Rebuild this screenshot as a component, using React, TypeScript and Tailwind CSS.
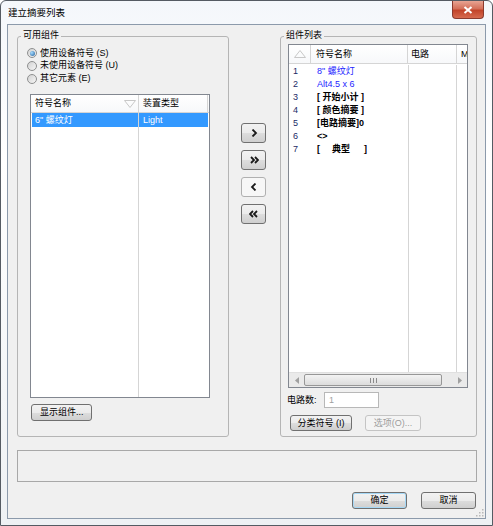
import React from 'react'

const btn =
  "flex items-center justify-center whitespace-nowrap border border-[#707070] rounded-[3px] bg-[linear-gradient(#f2f2f2_0%,#ebebeb_50%,#dddddd_51%,#cfcfcf_100%)] text-[9px] text-black leading-none"

function Radio({ checked }: { checked?: boolean }) {
  return (
    <span className="w-[10px] h-[10px] rounded-full border border-[#8e8f8f] bg-[linear-gradient(135deg,#d2d2d2,#f6f6f6)] flex items-center justify-center shrink-0">
      {checked && <span className="w-[5px] h-[5px] rounded-full bg-[radial-gradient(circle_at_35%_35%,#a8dcff,#1e5f9c)]" />}
    </span>
  )
}

function Chevron({ dir, double }: { dir: 'l' | 'r'; double?: boolean }) {
  const pts = dir === 'r' ? ['2,1 5,4 2,7', '6,1 9,4 6,7'] : ['8,1 5,4 8,7', '4,1 1,4 4,7']
  return (
    <svg width="10" height="8" viewBox="0 0 10 8">
      {double ? (
        pts.map((p) => <polyline key={p} points={p} fill="none" stroke="#1a1a1a" strokeWidth="1.8" />)
      ) : (
        <polyline points={dir === 'r' ? '3.5,0.5 7,4 3.5,7.5' : '6.5,0.5 3,4 6.5,7.5'} fill="none" stroke="#1a1a1a" strokeWidth="1.8" />
      )}
    </svg>
  )
}

function SortTri({ up }: { up?: boolean }) {
  return (
    <svg width="12" height="8" viewBox="0 0 12 8">
      <polygon points={up ? '6,0.5 11.5,7.5 0.5,7.5' : '0.5,0.5 11.5,0.5 6,7.5'} fill="none" stroke="#c8c8c8" strokeWidth="1" />
    </svg>
  )
}

const rows = [
  { n: '1', t: '8" 螺纹灯', c: 'text-[#2424ff]' },
  { n: '2', t: 'Alt4.5 x 6', c: 'text-[#2424ff]' },
  { n: '3', t: '[ 开始小计 ]', c: 'font-bold text-black' },
  { n: '4', t: '[ 颜色摘要 ]', c: 'font-bold text-black' },
  { n: '5', t: '[电路摘要]0', c: 'font-bold text-black' },
  { n: '6', t: '<>', c: 'font-bold text-black' },
]

export default function App() {
  return (
    <div className="w-[493px] h-[526px] font-['Liberation_Sans','Noto_Sans_CJK_SC',sans-serif] text-[9px] text-black">
      <div className="w-full h-full flex flex-col border border-[#555b63] rounded-t-[6px] bg-[linear-gradient(180deg,#f4f7fb_0%,#ffffff_30%,#eef1f4_100%)]">
        {/* title bar */}
        <div className="h-[23px] flex justify-between items-start">
          <span className="pl-[7px] pt-[7px] leading-none text-[9.5px]">建立摘要列表</span>
          <div className="mr-[8px] w-[32px] h-[18px] rounded-b-[4px] border border-t-0 border-[#8a3a2e] bg-[linear-gradient(#e8a493_0%,#d4705a_45%,#c2442a_55%,#d66a4f_100%)] flex items-center justify-center">
            <svg width="10" height="8" viewBox="0 0 10 8">
              <path d="M1.5 1 L8.5 7 M8.5 1 L1.5 7" stroke="#ffffff" strokeWidth="2" />
            </svg>
          </div>
        </div>

        {/* client */}
        <div className="flex-1 mx-[6px] mb-[6px] border border-[#8c9aab] bg-[#f0f0f0] flex flex-col relative">
          <div className="flex pl-[9px] pt-[11px]">
            {/* left group */}
            <div className="relative w-[212px] h-[401px] border border-[#b5b5b5] rounded-[3px] flex flex-col">
              <span className="absolute -top-[6px] left-[3px] bg-[#f0f0f0] px-[2px] leading-none whitespace-nowrap">可用组件</span>
              <div className="flex flex-col pt-[10px] pl-[9px]">
                <div className="h-[12px] flex items-center gap-[3px]">
                  <Radio checked />
                  <span className="leading-none whitespace-nowrap">使用设备符号 (S)</span>
                </div>
                <div className="h-[13px] flex items-center gap-[3px]">
                  <Radio />
                  <span className="leading-none whitespace-nowrap">未使用设备符号 (U)</span>
                </div>
                <div className="h-[13px] flex items-center gap-[3px]">
                  <Radio />
                  <span className="leading-none whitespace-nowrap">其它元素 (E)</span>
                </div>
              </div>
              {/* left list */}
              <div className="ml-[12px] mt-[9px] w-[180px] h-[304px] border border-[#828790] bg-white flex flex-col">
                <div className="h-[18px] flex border-b border-[#d5d5d5] bg-[linear-gradient(#ffffff,#f7f8fa)]">
                  <div className="w-[108px] flex items-center justify-between pl-[4px] pr-[2px] border-r border-[#d5d5d5]">
                    <span className="leading-none whitespace-nowrap">符号名称</span>
                    <SortTri />
                  </div>
                  <div className="flex-1 flex items-center pl-[4px] border-r border-[#d5d5d5] mr-[1px]">
                    <span className="leading-none whitespace-nowrap">装置类型</span>
                  </div>
                </div>
                <div className="flex-1 flex">
                  <div className="w-[108px] border-r border-[#d5d5d5] flex flex-col pl-[1px]">
                    <div className="h-[14px] bg-[#3399ff] text-white flex items-center pl-[3px]">
                      <span className="leading-none whitespace-nowrap">6" 螺纹灯</span>
                    </div>
                  </div>
                  <div className="flex-1 flex flex-col pr-[1px]">
                    <div className="h-[14px] bg-[#3399ff] text-white flex items-center pl-[4px]">
                      <span className="leading-none">Light</span>
                    </div>
                  </div>
                </div>
              </div>
              <div className={`${btn} ml-[13px] mt-[6px] w-[61px] h-[17px] !justify-start pl-[8px]`}>显示组件...</div>
            </div>

            {/* arrows */}
            <div className="ml-[12px] w-[25px] pt-[87px] flex flex-col gap-[7px]">
              <div className={`${btn} h-[20px]`}>
                <Chevron dir="r" />
              </div>
              <div className={`${btn} h-[20px]`}>
                <Chevron dir="r" double />
              </div>
              <div className="h-[20px] flex items-center justify-center border border-[#b0b0b0] rounded-[3px] bg-[#f7f7f7]">
                <Chevron dir="l" />
              </div>
              <div className={`${btn} h-[20px]`}>
                <Chevron dir="l" double />
              </div>
            </div>

            {/* right group */}
            <div className="relative ml-[14px] w-[197px] h-[401px] border border-[#b5b5b5] rounded-[3px] flex flex-col">
              <span className="absolute -top-[6px] left-[3px] bg-[#f0f0f0] px-[2px] leading-none whitespace-nowrap">组件列表</span>
              <div className="ml-[7px] mt-[7px] w-[180px] h-[344px] border border-[#828790] bg-white flex flex-col overflow-hidden">
                <div className="h-[19px] flex border-b border-[#d5d5d5] bg-[linear-gradient(#ffffff,#f7f8fa)] shrink-0">
                  <div className="w-[22px] flex items-center justify-center border-r border-[#d5d5d5]">
                    <SortTri up />
                  </div>
                  <div className="w-[97px] flex items-center pl-[5px] border-r border-[#d5d5d5]">
                    <span className="leading-none whitespace-nowrap">符号名称</span>
                  </div>
                  <div className="w-[49px] flex items-center pl-[3px] border-r border-[#d5d5d5]">
                    <span className="leading-none whitespace-nowrap">电路</span>
                  </div>
                  <div className="flex-1 min-w-0 overflow-hidden flex items-center pl-[4px]">
                    <span className="leading-none">M</span>
                  </div>
                </div>
                <div className="flex-1 flex pt-[1px]">
                  <div className="w-[119px] flex flex-col">
                    {rows.map((r) => (
                      <div key={r.n} className="h-[13px] flex items-center">
                        <span className="w-[22px] pl-[4px] text-[#1b2a66] leading-none">{r.n}</span>
                        <span className={`pl-[6px] leading-none whitespace-nowrap ${r.c}`}>{r.t}</span>
                      </div>
                    ))}
                    <div className="h-[13px] flex items-center">
                      <span className="w-[22px] pl-[4px] text-[#1b2a66] leading-none">7</span>
                      <span className="pl-[6px] leading-none font-bold">[</span>
                      <span className="pl-[12px] leading-none font-bold">典型</span>
                      <span className="pl-[14px] leading-none font-bold">]</span>
                    </div>
                  </div>
                  <div className="w-[49px] border-x border-[#d5d5d5]" />
                  <div className="flex-1" />
                </div>
                {/* scrollbar */}
                <div className="h-[15px] flex bg-[#eaeaea] border-t border-[#e0e0e0] shrink-0">
                  <div className="w-[15px] flex items-center justify-center">
                    <svg width="4" height="7" viewBox="0 0 4 7">
                      <polygon points="4,0 0,3.5 4,7" fill="#a0a0a0" />
                    </svg>
                  </div>
                  <div className="w-[138px] my-[1px] rounded-[2px] border border-[#979797] bg-[linear-gradient(#f3f3f3,#dcdcdc)] flex items-center justify-center gap-[2px]">
                    <span className="w-[1px] h-[5px] bg-[#8a8a8a]" />
                    <span className="w-[1px] h-[5px] bg-[#8a8a8a]" />
                    <span className="w-[1px] h-[5px] bg-[#8a8a8a]" />
                  </div>
                  <div className="flex-1" />
                  <div className="w-[15px] flex items-center justify-center">
                    <svg width="4" height="7" viewBox="0 0 4 7">
                      <polygon points="0,0 4,3.5 0,7" fill="#a0a0a0" />
                    </svg>
                  </div>
                </div>
              </div>
              <div className="flex items-center ml-[6px] mt-[4px]">
                <span className="w-[37px] leading-none whitespace-nowrap">电路数:</span>
                <div className="w-[55px] h-[16px] border border-[#b8b8b8] bg-white flex items-center pl-[4px] text-[#a0a0a0] leading-none">1</div>
              </div>
              <div className="flex ml-[9px] mt-[7px] gap-[13px]">
                <div className={`${btn} w-[62px] h-[16px]`}>分类符号 (I)</div>
                <div className="w-[56px] h-[16px] flex items-center justify-center whitespace-nowrap border border-[#c4c4c4] rounded-[3px] bg-[#f4f4f4] text-[#9c9c9c] leading-none">选项(O)...</div>
              </div>
            </div>
          </div>

          {/* status */}
          <div className="ml-[9px] mt-[13px] w-[460px] h-[32px] border border-[#a8a8a8]" />

          {/* bottom buttons */}
          <div className="flex justify-end gap-[14px] pr-[9px] mt-[10px]">
            <div className={`${btn} w-[55px] h-[17px] border-[#3c7fb1] shadow-[inset_0_0_0_1px_#a6d8f6]`}>确定</div>
            <div className={`${btn} w-[55px] h-[17px]`}>取消</div>
          </div>

          {/* size grip */}
          <svg className="absolute right-[1px] bottom-[1px]" width="10" height="10" viewBox="0 0 10 10">
            {[
              [8, 2],
              [8, 5],
              [5, 5],
              [8, 8],
              [5, 8],
              [2, 8],
            ].map(([x, y]) => (
              <rect key={`${x}-${y}`} x={x} y={y} width="1.5" height="1.5" fill="#b8b8b8" />
            ))}
          </svg>
        </div>
      </div>
    </div>
  )
}
